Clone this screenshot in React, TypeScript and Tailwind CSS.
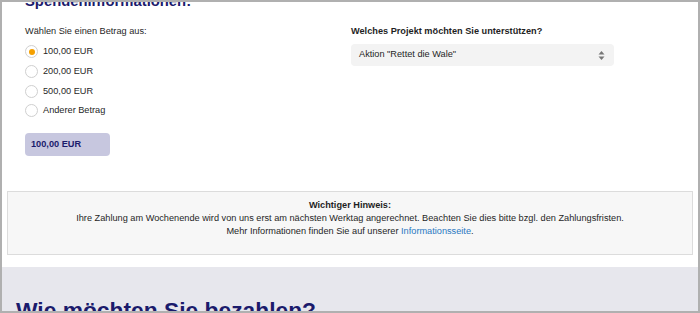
import React from 'react';

const amounts = ['100,00 EUR', '200,00 EUR', '500,00 EUR', 'Anderer Betrag'];

const Radio: React.FC<{ checked?: boolean; label: string }> = ({ checked, label }) => (
  <label className="flex h-[19.6px] items-center gap-[5px]">
    <span className="flex h-[13px] w-[13px] items-center justify-center rounded-full border border-[#cfcfcf] bg-white">
      {checked && <span className="h-[6px] w-[6px] rounded-full bg-[#f5a000]"></span>}
    </span>
    <span className="text-[9.2px] leading-[13px] text-[#1f1f1f]">{label}</span>
  </label>
);

const App: React.FC = () => {
  return (
    <div className="h-[313px] w-[700px] overflow-hidden border-2 border-[#b0b0b0] bg-white font-['Liberation_Sans',Arial,sans-serif]">
      <h2 className="-mt-[8px] px-[23px] text-[14.8px] font-bold leading-[15px] text-[#1b1b6c]">
        Spendeninformationen:
      </h2>

      <div className="grid grid-cols-2 px-[23px] pt-[15.5px]">
        {/* Betrag */}
        <div className="flex flex-col">
          <p className="text-[9.2px] leading-[13px] text-[#1f1f1f]">Wählen Sie einen Betrag aus:</p>
          <div className="mt-[4.7px] flex flex-col">
            {amounts.map((a, i) => (
              <Radio key={a} label={a} checked={i === 0} />
            ))}
          </div>
          <div className="mt-[12.4px] flex h-[23px] w-[85px] items-center rounded-[4px] bg-[#c7c7df] px-[6px] text-[9.2px] font-bold text-[#1b1b6c]">
            100,00 EUR
          </div>
        </div>

        {/* Projekt */}
        <div className="flex flex-col pl-[1px]">
          <p className="text-[9.2px] font-bold leading-[13px] text-[#1f1f1f]">
            Welches Projekt möchten Sie unterstützen?
          </p>
          <div className="mt-[6.5px] flex h-[22px] w-[263px] items-center justify-between rounded-[4px] bg-[#f3f3f3] pl-[8px] pr-[9px]">
            <span className="text-[9.2px] text-[#1f1f1f]">Aktion "Rettet die Wale"</span>
            <svg width="7" height="11" viewBox="0 0 7 11">
              <path d="M3.5 1 L6.5 4.5 L0.5 4.5 Z" fill="#777" />
              <path d="M3.5 10 L6.5 6.5 L0.5 6.5 Z" fill="#777" />
            </svg>
          </div>
        </div>
      </div>

      {/* Hinweis */}
      <div className="mx-[5px] mt-[35px] h-[64px] border border-[#dcdcdc] bg-[#f7f7f7] pt-[7.5px] text-center text-[9.2px] leading-[13px] text-[#1f1f1f]">
        <p className="font-bold">Wichtiger Hinweis:</p>
        <p>
          Ihre Zahlung am Wochenende wird von uns erst am nächsten Werktag angerechnet. Beachten Sie dies bitte bzgl. den Zahlungsfristen.
        </p>
        <p>
          Mehr Informationen finden Sie auf unserer <a className="text-[#2a78c2]">Informationsseite</a>.
        </p>
      </div>

      <section className="mt-[12px] h-[60px] bg-[#e7e7ed] pl-[14px] pt-[32px]">
        <h2 className="text-[22.8px] font-bold leading-[22.8px] text-[#1b1b6c]">Wie möchten Sie bezahlen?</h2>
      </section>
    </div>
  );
};

export default App;
